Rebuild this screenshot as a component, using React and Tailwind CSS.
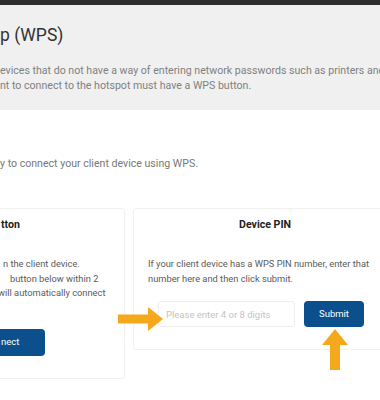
export default function App() {
  return (
    <div className="relative h-[400px] w-[380px] overflow-hidden bg-white font-['Roboto',sans-serif]">
      <div className="h-[5px] bg-[#2e2e30]" />

      {/* header panel */}
      <section className="h-[105px] bg-[#f0f0f0] pt-[16px]">
        <h1 className="whitespace-nowrap text-[17.5px] leading-[28px] text-[#333]">p (WPS)</h1>
        <div className="mt-[14px] whitespace-nowrap text-[10.6px] leading-[15px] text-[#808080]">
          <div>evices that do not have a way of entering network passwords such as printers and</div>
          <div>nt to connect to the hotspot must have a WPS button.</div>
        </div>
      </section>

      <p className="mt-[46px] whitespace-nowrap text-[10.6px] leading-[15px] text-[#777]">
        y to connect your client device using WPS.
      </p>

      {/* cards */}
      <div className="mt-[37px] flex gap-[8px]">
        <div className="-ml-[20px] h-[171px] w-[145px] shrink-0 rounded-[3px] border border-[#f1f1f1] pl-[20px] pt-[8px]">
          <h2 className="text-[10.6px] font-bold leading-[15px] text-[#222]">tton</h2>
          <div className="mt-[25px] whitespace-nowrap text-[9.3px] leading-[14.5px] text-[#5a5a5a]">
            <div className="pl-[2px]">n the client device.</div>
            <div className="pl-[9px]">button below within 2</div>
            <div className="-ml-[3px]">will automatically connect</div>
          </div>
          <button className="-ml-[30px] mt-[28px] h-[27px] w-[74px] rounded-[4px] bg-[#0b4f8c] pl-[30px] text-left text-[9.5px] text-white">
            nect
          </button>
        </div>

        <div className="h-[142px] w-[264px] shrink-0 rounded-[3px] border border-[#f1f1f1] pt-[8px]">
          <h2 className="text-center text-[10.6px] font-bold leading-[15px] text-[#222]">Device PIN</h2>
          <p className="mt-[25px] whitespace-nowrap pl-[14px] text-[9.3px] leading-[14.5px] text-[#5a5a5a]">
            If your client device has a WPS PIN number, enter that
            <br />
            number here and then click submit.
          </p>
          <div className="mt-[15px] flex items-center gap-[9px] pl-[24px]">
            <input
              placeholder="Please enter 4 or 8 digits"
              className="h-[26px] w-[137px] rounded-[3px] border border-[#eeeeee] px-[7px] text-[9.5px] text-[#333] outline-none placeholder:text-[#c4c4c4]"
            />
            <button className="h-[26px] w-[60px] rounded-[4px] bg-[#0b4f8c] text-[9.5px] text-white">
              Submit
            </button>
          </div>
        </div>
      </div>

      {/* annotation arrows */}
      <svg className="absolute left-[118px] top-[307px]" width="46" height="24" viewBox="0 0 46 24">
        <path d="M0 7.5 H30 V0 L45 12 L30 24 V16.5 H0 Z" fill="#f6a81d" />
      </svg>
      <svg className="absolute left-[322px] top-[329px]" width="26" height="42" viewBox="0 0 26 42">
        <path d="M13 0 L26 16 H18 V41 H8 V16 H0 Z" fill="#f6a81d" />
      </svg>
    </div>
  );
}
